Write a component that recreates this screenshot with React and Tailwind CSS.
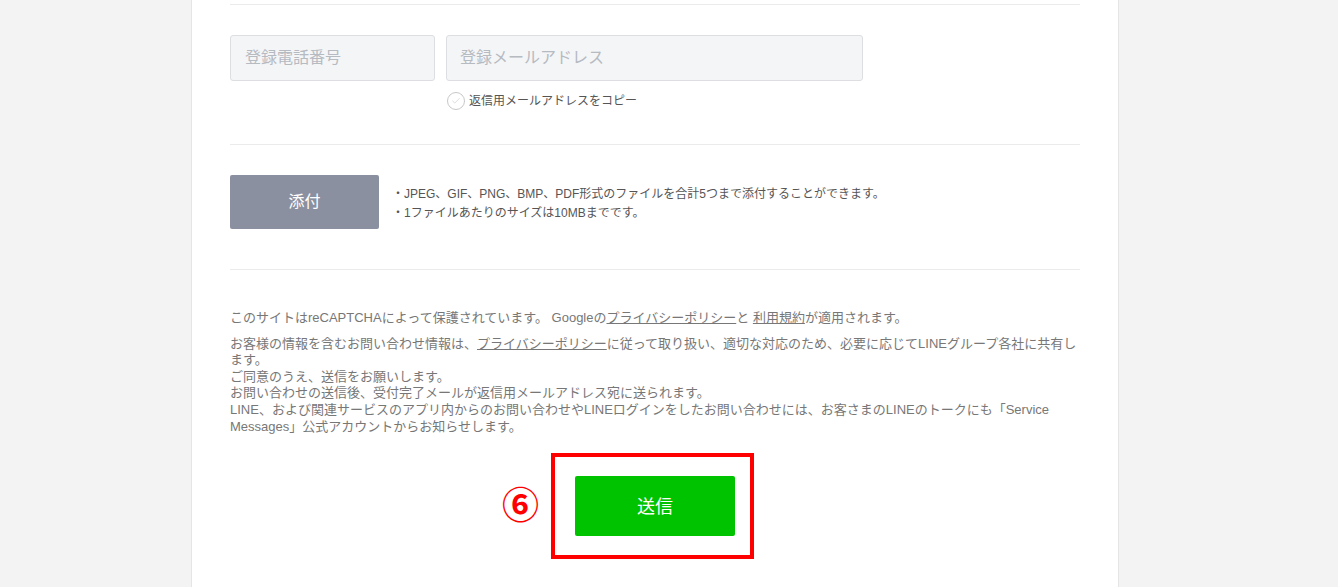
import { Check } from "lucide-react";

const font = {
  fontFamily: '"Liberation Sans", "Noto Sans CJK JP", sans-serif',
};

function Divider() {
  return <div className="h-px w-full bg-[#ebebeb]" />;
}

function SubmitArea() {
  return (
    <div className="flex justify-center pt-[41px]">
      <div className="relative">
        <div className="pointer-events-none absolute left-[-24px] top-[-23px] h-[106px] w-[203px] border-4 border-[#ff0000]" />
        <span className="absolute left-[-73px] top-[11px] text-[37px] font-bold leading-[40px] text-[#ff0000]">
          ⑥
        </span>
        <button
          type="button"
          className="flex h-[60px] w-[160px] items-center justify-center rounded-[2px] bg-[#00c300] pt-[3px] text-[18px] text-white"
        >
          送信
        </button>
      </div>
    </div>
  );
}

function App() {
  return (
    <div className="min-h-[587px] bg-[#f3f3f3]" style={font}>
      <div className="ml-[191px] min-h-[587px] w-[928px] border-x border-[#e5e5e5] bg-white px-[38px] pt-[4px]">
        <Divider />

        <div className="flex gap-[11px] pt-[30px]">
          <div className="flex h-[46px] w-[205px] items-center rounded-[3px] border border-[#dcdee2] bg-[#f4f5f7] px-[14px] text-[16px] text-[#b6bac1]">
            登録電話番号
          </div>
          <div className="flex flex-col">
            <div className="flex h-[46px] w-[417px] items-center rounded-[3px] border border-[#dcdee2] bg-[#f4f5f7] px-[13px] text-[16px] text-[#b6bac1]">
              登録メールアドレス
            </div>
            <label className="mt-[11px] flex items-center gap-[4px] pl-[1px] text-[12px] text-[#555]">
              <span className="flex h-[18px] w-[18px] items-center justify-center rounded-full border border-[#c8c8c8]">
                <Check size={10} strokeWidth={1.5} className="text-[#c8c8c8]" />
              </span>
              返信用メールアドレスをコピー
            </label>
          </div>
        </div>

        <div className="pt-[34px]">
          <Divider />
        </div>

        <div className="flex items-center gap-[13px] pt-[30px]">
          <button
            type="button"
            className="flex h-[54px] w-[149px] items-center justify-center rounded-[2px] bg-[#8a90a0] text-[16px] text-white"
          >
            添付
          </button>
          <div className="pt-[3px] text-[12px] leading-[19px] text-[#555]">
            <p>・JPEG、GIF、PNG、BMP、PDF形式のファイルを合計5つまで添付することができます。</p>
            <p>・1ファイルあたりのサイズは10MBまでです。</p>
          </div>
        </div>

        <div className="pt-[40px]">
          <Divider />
        </div>

        <div className="w-[880px] pt-[40px] text-[13px] leading-[16.6px] text-[#777]">
          <p>
            このサイトはreCAPTCHAによって保護されています。 Googleの
            <span className="underline">プライバシーポリシー</span>と{" "}
            <span className="underline">利用規約</span>が適用されます。
          </p>
          <p className="mt-[9px]">
            お客様の情報を含むお問い合わせ情報は、
            <span className="underline">プライバシーポリシー</span>
            に従って取り扱い、適切な対応のため、必要に応じてLINEグループ各社に共有し
            <br />
            ます。
            <br />
            ご同意のうえ、送信をお願いします。
            <br />
            お問い合わせの送信後、受付完了メールが返信用メールアドレス宛に送られます。
            <br />
            LINE、および関連サービスのアプリ内からのお問い合わせやLINEログインをしたお問い合わせには、お客さまのLINEのトークにも「Service
            <br />
            Messages」公式アカウントからお知らせします。
          </p>
        </div>

        <SubmitArea />
      </div>
    </div>
  );
}

export default App;
